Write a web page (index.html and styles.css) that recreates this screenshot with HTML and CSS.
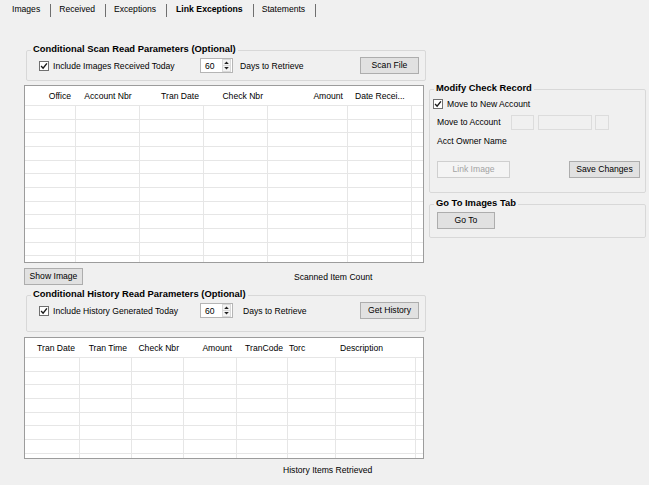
FILE: index.html
```html
<!DOCTYPE html>
<html>
<head>
<meta charset="utf-8">
<title>Link Exceptions</title>
<link rel="stylesheet" href="styles.css">
</head>
<body>
<div class="tabs">
  <div class="tab">Images</div>
  <div class="tab">Received</div>
  <div class="tab">Exceptions</div>
  <div class="tab active">Link Exceptions</div>
  <div class="tab">Statements</div>
</div>

<div class="page">
  <div class="left">
    <fieldset class="group g-scan">
      <legend>Conditional Scan Read Parameters (Optional)</legend>
      <div class="param-row">
        <label class="check param-check"><span class="box"><svg width="8" height="8" viewBox="0 0 8 8"><path d="M1.1 4.1 L3.1 6.2 L6.9 1.4" fill="none" stroke="#1a1a1a" stroke-width="1.4"/></svg></span>Include Images Received Today</label>
        <div class="spin"><span class="spin-val">60</span><span class="spin-btns"><svg width="9" height="13" viewBox="0 0 9 13"><rect x="0.5" y="0.5" width="8" height="12" fill="#f3f3f3" stroke="#d9d9d9"/><line x1="0.5" y1="6.5" x2="8.5" y2="6.5" stroke="#d9d9d9"/><path d="M2.2 5 L4.5 2.6 L6.8 5Z" fill="#222"/><path d="M2.2 8 L4.5 10.4 L6.8 8Z" fill="#222"/></svg></span></div>
        <span class="days">Days to Retrieve</span>
        <button class="btn btn-action">Scan File</button>
      </div>
    </fieldset>

    <div class="grid grid-scan">
      <table>
        <colgroup><col style="width:51px"><col style="width:64px"><col style="width:64px"><col style="width:64px"><col style="width:80px"><col style="width:64px"><col></colgroup>
        <thead><tr><th class="r">Office</th><th class="c">Account Nbr</th><th class="r">Tran Date</th><th class="r">Check Nbr</th><th class="r">Amount</th><th class="l wide">Date Recei...</th><th></th></tr></thead>
        <tbody>
          <tr><td></td><td></td><td></td><td></td><td></td><td></td><td></td></tr>
          <tr><td></td><td></td><td></td><td></td><td></td><td></td><td></td></tr>
          <tr><td></td><td></td><td></td><td></td><td></td><td></td><td></td></tr>
          <tr><td></td><td></td><td></td><td></td><td></td><td></td><td></td></tr>
          <tr><td></td><td></td><td></td><td></td><td></td><td></td><td></td></tr>
          <tr><td></td><td></td><td></td><td></td><td></td><td></td><td></td></tr>
          <tr><td></td><td></td><td></td><td></td><td></td><td></td><td></td></tr>
          <tr><td></td><td></td><td></td><td></td><td></td><td></td><td></td></tr>
          <tr><td></td><td></td><td></td><td></td><td></td><td></td><td></td></tr>
          <tr><td></td><td></td><td></td><td></td><td></td><td></td><td></td></tr>
          <tr><td></td><td></td><td></td><td></td><td></td><td></td><td></td></tr>
          <tr><td></td><td></td><td></td><td></td><td></td><td></td><td></td></tr>
        </tbody>
      </table>
    </div>

    <div class="status-row">
      <button class="btn btn-action">Show Image</button>
      <span class="scan-count">Scanned Item Count</span>
    </div>

    <fieldset class="group g-hist">
      <legend>Conditional History Read Parameters (Optional)</legend>
      <div class="param-row">
        <label class="check param-check"><span class="box"><svg width="8" height="8" viewBox="0 0 8 8"><path d="M1.1 4.1 L3.1 6.2 L6.9 1.4" fill="none" stroke="#1a1a1a" stroke-width="1.4"/></svg></span>Include History Generated Today</label>
        <div class="spin"><span class="spin-val">60</span><span class="spin-btns"><svg width="9" height="13" viewBox="0 0 9 13"><rect x="0.5" y="0.5" width="8" height="12" fill="#f3f3f3" stroke="#d9d9d9"/><line x1="0.5" y1="6.5" x2="8.5" y2="6.5" stroke="#d9d9d9"/><path d="M2.2 5 L4.5 2.6 L6.8 5Z" fill="#222"/><path d="M2.2 8 L4.5 10.4 L6.8 8Z" fill="#222"/></svg></span></div>
        <span class="days">Days to Retrieve</span>
        <button class="btn btn-action">Get History</button>
      </div>
    </fieldset>

    <div class="grid grid-hist">
      <table>
        <colgroup><col style="width:55px"><col style="width:52px"><col style="width:52px"><col style="width:53px"><col style="width:51px"><col style="width:48px"><col style="width:80px"><col></colgroup>
        <thead><tr><th class="r">Tran Date</th><th class="r">Tran Time</th><th class="r">Check Nbr</th><th class="r">Amount</th><th class="r">TranCode</th><th class="l tight">Torc</th><th class="l">Description</th><th></th></tr></thead>
        <tbody>
          <tr><td></td><td></td><td></td><td></td><td></td><td></td><td></td><td></td></tr>
          <tr><td></td><td></td><td></td><td></td><td></td><td></td><td></td><td></td></tr>
          <tr><td></td><td></td><td></td><td></td><td></td><td></td><td></td><td></td></tr>
          <tr><td></td><td></td><td></td><td></td><td></td><td></td><td></td><td></td></tr>
          <tr><td></td><td></td><td></td><td></td><td></td><td></td><td></td><td></td></tr>
          <tr><td></td><td></td><td></td><td></td><td></td><td></td><td></td><td></td></tr>
          <tr><td></td><td></td><td></td><td></td><td></td><td></td><td></td><td></td></tr>
          <tr><td></td><td></td><td></td><td></td><td></td><td></td><td></td><td></td></tr>
        </tbody>
      </table>
    </div>

    <div class="hist-count">History Items Retrieved</div>
  </div>

  <div class="right">
    <fieldset class="group g-modify">
      <legend>Modify Check Record</legend>
      <label class="check move-check"><span class="box"><svg width="8" height="8" viewBox="0 0 8 8"><path d="M1.1 4.1 L3.1 6.2 L6.9 1.4" fill="none" stroke="#1a1a1a" stroke-width="1.4"/></svg></span>Move to New Account</label>
      <div class="acct-row">
        <span class="acct-label">Move to Account</span>
        <span class="acct-in in-a"></span>
        <span class="acct-in in-b"></span>
        <span class="acct-in in-c"></span>
      </div>
      <div class="owner">Acct Owner Name</div>
      <div class="btn-row">
        <button class="btn btn-link" disabled>Link Image</button>
        <button class="btn btn-save">Save Changes</button>
      </div>
    </fieldset>

    <fieldset class="group g-goto">
      <legend>Go To Images Tab</legend>
      <button class="btn btn-goto">Go To</button>
    </fieldset>
  </div>
</div>
</body>
</html>
```

FILE: styles.css
```css
* { box-sizing: border-box; }

html, body { margin: 0; }

body {
  width: 649px;
  height: 485px;
  overflow: hidden;
  background: #f0f0f0;
  font-family: "Liberation Sans", Arial, sans-serif;
  font-size: 8.6px;
  line-height: 10px;
  color: #000;
}

/* ---------- tab strip ---------- */
.tabs {
  display: flex;
  height: 17px;
  padding-left: 4px;
}

.tab {
  margin-top: 4px;
  height: 13px;
  padding: 0 10px 0 8px;
  border-right: 1px solid #6f6f6f;
  line-height: 10px;
  white-space: nowrap;
}

.tab.active {
  font-weight: bold;
  font-size: 8.7px;
  padding: 0 10px 0 9px;
}

/* ---------- page layout ---------- */
.page {
  display: flex;
  padding: 27px 0 0 24px;
}

.left {
  width: 402px;
  display: flex;
  flex-direction: column;
}

.right {
  width: 217px;
  margin-left: 3px;
  margin-top: 39px;
  display: flex;
  flex-direction: column;
}

/* ---------- group boxes ---------- */
.group {
  margin: 0;
  min-width: 0;
  padding: 0 6px 0 4px;
  border: 1px solid #d8d8d8;
  border-radius: 2px;
}

.group legend {
  padding: 0 2px 3px;
  font-weight: bold;
  font-size: 9.4px;
  line-height: 10px;
  white-space: nowrap;
}

.g-scan {
  margin-left: 2px;
  padding-bottom: 6px;
}

.g-hist {
  margin: 4px 0 0 2px;
  padding-bottom: 12px;
}

.param-row {
  display: flex;
  align-items: center;
  height: 17px;
  margin-left: 8px;
}

/* ---------- checkbox ---------- */
.check {
  display: flex;
  align-items: center;
  white-space: nowrap;
}

.box {
  width: 10px;
  height: 10px;
  margin-right: 4px;
  border: 1px solid #707070;
  background: #fff;
  display: flex;
  align-items: center;
  justify-content: center;
  flex: none;
}

.param-check { width: 161px; }

/* ---------- numeric spin ---------- */
.spin {
  width: 33px;
  height: 15px;
  border: 1px solid #b5b5b5;
  background: #fff;
  display: flex;
  align-items: center;
  padding-right: 1px;
}

.spin-val {
  flex: 1;
  padding-left: 4px;
}

.spin-btns { display: flex; }

.days { margin-left: 7px; }
.g-hist .days { margin-left: 10px; }

/* ---------- buttons ---------- */
.btn {
  font-family: inherit;
  font-size: inherit;
  height: 17px;
  padding: 0;
  border: 1px solid #adadad;
  background: #e1e1e1;
  color: #000;
  line-height: 15px;
  text-align: center;
  white-space: nowrap;
}

.btn-action { width: 59px; }
.param-row .btn-action { margin-left: auto; }

.btn-link {
  width: 73px;
  border-color: #cfcfcf;
  background: #f4f4f4;
  color: #a3a3a3;
}

.btn-save { width: 71px; }

.btn-goto {
  width: 58px;
  margin: 1px 0 0 3px;
  display: block;
}

/* ---------- data grids ---------- */
.grid {
  width: 400px;
  border: 1px solid #9c9c9c;
  background: #fff;
  overflow: hidden;
}

.grid-scan { height: 178px; margin-top: 4px; }
.grid-hist { height: 122px; margin-top: 5px; }

.grid table {
  width: 398px;
  table-layout: fixed;
  border-collapse: separate;
  border-spacing: 0;
}

.grid thead tr { height: 20px; }
.grid tbody tr { height: 13.67px; }

.grid th {
  padding: 0;
  font-weight: normal;
  white-space: nowrap;
  overflow: hidden;
  vertical-align: middle;
  border-bottom: 1px solid #e6e6e6;
}

.grid th.r { text-align: right; padding-right: 5px; }
.grid th.c { text-align: center; }
.grid th.l { text-align: left; padding-left: 4px; }
.grid th.tight { padding-left: 1px; }
.grid th.wide { padding-left: 7px; }

.grid td {
  padding: 0;
  border-right: 1px solid #e6e6e6;
  border-bottom: 1px solid #e6e6e6;
}

.grid td:last-child { border-right: 0; }

/* ---------- status lines ---------- */
.status-row {
  display: flex;
  align-items: center;
  margin-top: 5px;
  height: 17px;
}

.scan-count { margin-left: 211px; }

.hist-count {
  margin-top: 6px;
  padding-left: 259px;
}

/* ---------- modify check record ---------- */
.g-modify {
  padding-right: 5px;
  padding-bottom: 14px;
}

.move-check {
  height: 14px;
  margin: 1px 0 0 -1px;
}

.acct-row {
  display: flex;
  align-items: center;
  height: 16px;
  margin: 3px 0 0 3px;
}

.acct-label { width: 74px; }

.acct-in {
  height: 15px;
  border: 1px solid #dcdcdc;
  background: #f0f0f0;
}

.in-a { width: 23px; }
.in-b { width: 54px; margin-left: 4px; }
.in-c { width: 14px; margin-left: 3px; }

.owner {
  margin: 6px 0 0 3px;
}

.btn-row {
  display: flex;
  justify-content: space-between;
  margin: 15px 0 0 3px;
}

.g-goto {
  margin-top: 5px;
  padding-bottom: 8px;
}
```
